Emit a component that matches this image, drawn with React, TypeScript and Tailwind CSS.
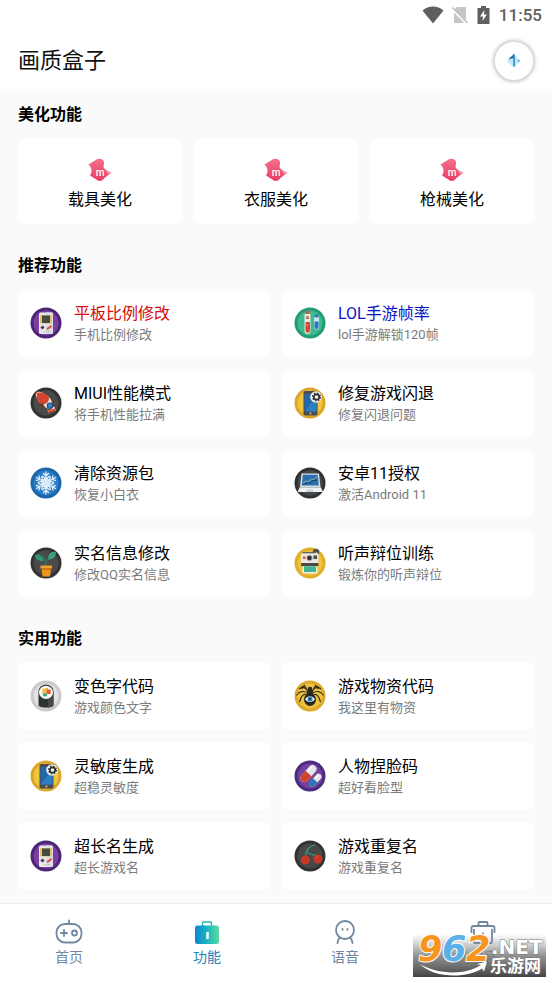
import { useState } from 'react';
import type { ReactNode } from 'react';

type IconName =
  | 'gameboy'
  | 'tubes'
  | 'rocket'
  | 'phone'
  | 'snow'
  | 'laptop'
  | 'plant'
  | 'camera'
  | 'sushi'
  | 'spider'
  | 'pills'
  | 'cherry';

interface Feature {
  title: string;
  desc: string;
  icon: IconName;
  color?: string;
}

const beautify = ['载具美化', '衣服美化', '枪械美化'];

const recommended: Feature[] = [
  { title: '平板比例修改', desc: '手机比例修改', icon: 'gameboy', color: 'text-[#d50b0b]' },
  { title: 'LOL手游帧率', desc: 'lol手游解锁120帧', icon: 'tubes', color: 'text-[#0b12c4]' },
  { title: 'MIUI性能模式', desc: '将手机性能拉满', icon: 'rocket' },
  { title: '修复游戏闪退', desc: '修复闪退问题', icon: 'phone' },
  { title: '清除资源包', desc: '恢复小白衣', icon: 'snow' },
  { title: '安卓11授权', desc: '激活Android 11', icon: 'laptop' },
  { title: '实名信息修改', desc: '修改QQ实名信息', icon: 'plant' },
  { title: '听声辩位训练', desc: '锻炼你的听声辩位', icon: 'camera' },
];

const practical: Feature[] = [
  { title: '变色字代码', desc: '游戏颜色文字', icon: 'sushi' },
  { title: '游戏物资代码', desc: '我这里有物资', icon: 'spider' },
  { title: '灵敏度生成', desc: '超稳灵敏度', icon: 'phone' },
  { title: '人物捏脸码', desc: '超好看脸型', icon: 'pills' },
  { title: '超长名生成', desc: '超长游戏名', icon: 'gameboy' },
  { title: '游戏重复名', desc: '游戏重复名', icon: 'cherry' },
];

const discs: Record<IconName, [string, string]> = {
  gameboy: ['#4b2676', '#7b3fa3'],
  tubes: ['#239b76', '#3fb98f'],
  rocket: ['#333333', '#4a4a4a'],
  phone: ['#dba62c', '#f0c63a'],
  snow: ['#1c66ab', '#2a7cc4'],
  laptop: ['#303336', '#45494c'],
  plant: ['#333333', '#4a4a4a'],
  camera: ['#dfae2b', '#eec43a'],
  sushi: ['#cacaca', '#e2e2e2'],
  spider: ['#dca92c', '#edc23c'],
  pills: ['#4b2a80', '#71439c'],
  cherry: ['#333333', '#484848'],
};

const drawings: Record<IconName, ReactNode> = {
  gameboy: (
    <>
      <rect x="9" y="5.5" width="14" height="21.5" rx="1.5" fill="#e9e8ec" />
      <path d="M16 5.5h5.5A1.5 1.5 0 0 1 23 7v18.5a1.5 1.5 0 0 1-1.5 1.5H16z" fill="#dddce3" />
      <rect x="10" y="8" width="12" height="8.5" rx=".8" fill="#e3c467" />
      <rect x="12" y="8.5" width="8" height="7.5" fill="#454a42" />
      <path d="M12.5 18.7v3.6M10.7 20.5h3.6" stroke="#39354a" strokeWidth="1.5" />
      <path d="m17.5 21.8 1.8-1.2M19.8 20.3l1.2-1" stroke="#d84b3c" strokeWidth="1.9" strokeLinecap="round" />
      <path d="m13.5 24.5 1 .9M16 25l1-.9M18 25l1-.9" stroke="#92909b" strokeWidth=".8" />
    </>
  ),
  tubes: (
    <>
      <rect x="10.5" y="5" width="6" height="22" rx="3" fill="#e8ece8" />
      <rect x="11" y="4" width="5" height="3" rx="1" fill="#bd6450" />
      <path d="M11.5 15h4.5v8.5a2.25 2.25 0 0 1-4.5 0z" fill="#df4630" />
      <path d="m12 9.500 3 2M15 9.500l-3 2" stroke="#c55845" strokeWidth="1.2" />
      <circle cx="13" cy="18" r=".8" fill="#f2a08f" />
      <rect x="20" y="9" width="5" height="13.5" rx="2" fill="#cfe4ec" />
      <rect x="20.5" y="7.5" width="4" height="3" rx=".8" fill="#327fae" />
      <path d="M20.5 14.5h4v5.5a2 2 0 0 1-4 0z" fill="#2077b9" />
    </>
  ),
  rocket: (
    <>
      <path d="M6 6c1-1.8 4-1.5 6.5-.3C19 8.5 24 15 25.5 23.5c-7.5-.8-14-4.5-17.5-10.5C6.5 10.5 5 8 6 6z" fill="#e9eaec" />
      <path d="M5.5 4.5 8 5.800c4-1 9 .7 11 5 .5 3.500-2.500 6.700-7 7C7.5 15.500 5.8 11 7 8z" fill="#d4452f" />
      <path d="m9 17 3.5-1 3 5-2 1zM21 13l2 1.5 2.5 6-2.5-1z" fill="#6d3d33" />
      <circle cx="20" cy="18.7" r="3.3" fill="#234a72" />
      <circle cx="20" cy="18.7" r="2.1" fill="#3385c5" />
      <path d="m17 23 2 4 1.5-3 2 2 .5-2.5 3 1-1-3" fill="#e2573b" />
    </>
  ),
  phone: (
    <>
      <rect x="9.5" y="4" width="14" height="24.5" rx="1.8" fill="#514a4d" />
      <path d="M10.5 7h12v17.5h-12z" fill="#2468ac" />
      <path d="M22.5 9v15.5H11z" fill="#2e80c3" />
      <circle cx="16.5" cy="26.4" r=".9" fill="#ddd5c8" />
      <circle cx="22" cy="10" r="5.8" fill="#f2f1ee" />
      <circle cx="22.5" cy="10" r="2.7" fill="none" stroke="#2c2d30" strokeWidth="1.7" />
      <circle cx="22.5" cy="10" r="3.9" fill="none" stroke="#2c2d30" strokeWidth="1.3" strokeDasharray="1.5 1.56" />
    </>
  ),
  snow: (
    <g stroke="#e2effa" strokeWidth="1.4" strokeLinecap="round" fill="none">
      {[0, 60, 120, 180, 240, 300].map((deg) => (
        <g key={deg} transform={`rotate(${deg} 16 16)`}>
          <path d="M16 16V5M13.5 6.5 16 9l2.5-2.5M12.7 9.2 16 12.2l3.3-3" />
        </g>
      ))}
      <circle cx="16" cy="16" r="4" fill="#d9eafa" />
    </g>
  ),
  laptop: (
    <>
      <path d="M7.5 6.5h17.5l1.5 14H6z" fill="#d7dee1" />
      <path d="M8.8 7.7h15l1 10.8H7.9z" fill="#2a6faf" />
      <path d="m9 16 3.5-2 2 .8 3-3 2 1 4-3.5" stroke="#9ab7ac" strokeWidth="1" fill="none" />
      <path d="m9 17.5 4-1.8 3 .5 3-2.5 4-.7" stroke="#183d66" strokeWidth="1" fill="none" />
      <path d="M5.5 20.5h21.5l2 4.5H3.7z" fill="#eef0f1" />
      <path d="M13 22.5h6l.5 2.5h-7z" fill="#cdd1d4" />
    </>
  ),
  plant: (
    <>
      <path d="M15.8 19c0-5-1-8.5-3.5-10M16 17c.3-3 1.5-5.5 3.5-7" stroke="#34785e" strokeWidth="1" fill="none" />
      <path d="M4.5 8c4-1.5 8 .2 9.5 5.5C9.5 15 6 12.5 4.5 8z" fill="#2d9c7c" />
      <path d="M18 12.5C18 7.5 21.5 4 26 5c-.3 5-3.5 7.5-8 7.5z" fill="#38ad88" />
      <path d="M5 8.5c3.5.5 6.5 2 8.5 4.5M18.5 12c2-3 4-5 7-6.5" stroke="#1f7b60" strokeWidth=".6" fill="none" />
      <rect x="10.5" y="18.5" width="11.5" height="3" rx=".5" fill="#f0a42e" />
      <path d="M11.5 21.5h9.5l-1 8h-7.5z" fill="#ee951c" />
      <path d="M11.5 21.5h9.5l-.2 1.2h-9.1z" fill="#c56d16" />
    </>
  ),
  camera: (
    <>
      <circle cx="22" cy="5" r="3.2" fill="#56504a" />
      <path d="M8.5 5.5h14.5l1.5 2v8.5H7V7.5z" fill="#e9e8e4" />
      <path d="M8.5 5h13v1.3h-13z" fill="#6b6255" />
      <rect x="7" y="16" width="17.5" height="3.3" rx=".8" fill="#4c4944" />
      <circle cx="15.5" cy="11" r="3.2" fill="#b9b9b9" />
      <circle cx="15.5" cy="11" r="2.3" fill="#302f37" />
      <path d="M9 9.5h2.5v2.5H9z" fill="#d15d47" />
      <path d="M19.5 8.5H23v3.5h-3.5z" fill="#4b4a50" />
      <path d="M8.5 19.3h15v7.2h-15z" fill="#eceeea" />
      <path d="M10 19.3h12V25H10z" fill="#3fb592" />
    </>
  ),
  sushi: (
    <>
      <path d="M8.5 12v13c0 3.5 15 3.5 15 0V12z" fill="#2f3334" />
      <path d="M18 13v14.5c3.5-.3 5.5-1.2 5.5-2.5V12z" fill="#46494a" />
      <ellipse cx="16" cy="11.5" rx="7.5" ry="7" fill="#393d3e" />
      <ellipse cx="16" cy="12.3" rx="7" ry="6.6" fill="#f8f8f8" />
      <path d="M12.5 8.5h4v6h-4z" fill="#f0c23c" />
      <path d="M16.5 9.5h4.2V14h-4.2z" fill="#e05c39" />
      <path d="M13 13.5h4v2.8h-4z" fill="#39a77f" />
      <path d="M16 8h2v2h-2z" fill="#efa03a" />
    </>
  ),
  spider: (
    <>
      <path
        d="M14.5 12.5C12.5 7.5 9 6.5 7.5 9M14 13C9.5 10.5 5.5 11 2.5 15.5M14 14.5C9 13.5 7 16 5.5 22M17.5 12.5c2-5 5.5-6 7-3.5M18 13c4.5-2.5 8.5-2 11.5 2.5M18 14.5c5-1 7 1.5 8.5 7.5M13.5 11 10.500 5.500 5 9M18.5 11l3-5.500L27 9"
        stroke="#292522"
        strokeWidth="1.1"
        fill="none"
      />
      <circle cx="16" cy="9" r="2.3" fill="#2b2825" />
      <path d="M13.5 10h5l.5 5h-6z" fill="#2b2825" />
      <ellipse cx="16" cy="19.5" rx="6" ry="6.5" fill="#292724" />
      <path d="M11 19.3c2.5-4 7.5-4 10 0-2.5 3.5-7.5 3.5-10 0z" fill="#ecf2f3" />
      <circle cx="16" cy="19" r="2.5" fill="#3185bf" />
      <circle cx="16" cy="19" r="1" fill="#173453" />
    </>
  ),
  pills: (
    <>
      <g transform="rotate(42 14.5 13.5)">
        <rect x="10.5" y="3.5" width="8" height="20" rx="4" fill="#e5e5e9" />
        <path d="M10.5 13.5h8v6a4 4 0 0 1-8 0z" fill="#d1452e" />
        <path d="M12.500 7v5" stroke="#ffffff" strokeWidth="1.2" strokeLinecap="round" />
      </g>
      <g transform="rotate(42 21.5 20)">
        <rect x="18.5" y="12.5" width="6" height="15.5" rx="3" fill="#e5e5e9" />
        <path d="M18.5 20.5h6v4.5a3 3 0 0 1-6 0z" fill="#2776b8" />
        <path d="M20.500 15v4" stroke="#ffffff" strokeWidth="1" strokeLinecap="round" />
      </g>
    </>
  ),
  cherry: (
    <>
      <path d="M11.5 18c0-7.500 3-12 9.500-13M12.500 11c2 3.500 6 3 11 5" stroke="#36a083" strokeWidth="1.1" fill="none" />
      <circle cx="11.500" cy="20" r="4.5" fill="#c93625" />
      <circle cx="24" cy="19" r="4.5" fill="#c93625" />
      <path d="M9 19c.4-1 1-1.5 2-1.700M21.500 18c.4-1 1-1.5 2-1.700" stroke="#d95845" strokeWidth="1" fill="none" />
    </>
  ),
};

function FeatureIcon({ name }: { name: IconName }) {
  const [outer, inner] = discs[name];
  return (
    <svg className="h-8 w-8 shrink-0" viewBox="0 0 32 32" aria-hidden="true">
      <circle cx="16" cy="16" r="15.5" fill={outer} />
      <circle cx="16" cy="16" r="12.5" fill={inner} />
      {drawings[name]}
    </svg>
  );
}

function StatusBar() {
  return (
    <div className="flex h-[30px] items-center justify-end gap-2 bg-white pr-[10px] text-[#5f5f5f]">
      <svg className="h-[18px] w-[22px]" viewBox="0 0 22 18" fill="currentColor">
        <path d="M11 17.5.5 4.5C6.5-.8 15.5-.8 21.5 4.5z" />
      </svg>
      <svg className="h-[18px] w-4" viewBox="0 0 16 18">
        <path d="M5 1h9v16H2V4z" fill="#c6c6c6" />
        <path d="m0 2.5 15 15" stroke="#ffffff" strokeWidth="3" />
        <path d="m.5 1.5 15 15.5" stroke="#bdbdbd" strokeWidth="1.5" />
      </svg>
      <svg className="mx-px h-[18px] w-[13px]" viewBox="0 0 13 18">
        <path d="M4 0h5v2h3.5v16H.5V2H4z" fill="currentColor" />
        <path d="M7.5 4 3 10.5h3L5.5 15l4.5-6.5H7z" fill="#ffffff" />
      </svg>
      <span className="text-[17px] leading-[30px] font-medium">11:55</span>
    </div>
  );
}

function BeautifyIcon() {
  return (
    <svg className="h-6 w-6" viewBox="0 0 24 24" aria-hidden="true">
      <defs>
        <linearGradient id="pink" x1="0" y1="0" x2="0" y2="1">
          <stop offset="0" stopColor="#f5718d" />
          <stop offset="1" stopColor="#e93a62" />
        </linearGradient>
      </defs>
      <path d="m15 10 8.500 5-7 5z" fill="#f2879f" />
      <path d="M.5 6.500 9 1.200c4.500-1.500 8 1.300 7 5.300-.8 2-.5 3.500.8 4.500l3.200 5.500-5.500 5.500c-1.500 1.200-3.500 1.200-5 .3L2 17.500c2-3 2.500-7.500-1.500-11z" fill="url(#pink)" />
      <text x="12" y="18" textAnchor="middle" fill="#ffffff" className="font-['Roboto'] text-[10px] font-medium">
        m
      </text>
    </svg>
  );
}

function SectionTitle({ children }: { children: ReactNode }) {
  return <h2 className="mb-[11px] text-base leading-6 font-bold text-black">{children}</h2>;
}

function FeatureGrid({ items }: { items: Feature[] }) {
  return (
    <div className="grid grid-cols-2 gap-3">
      {items.map((item) => (
        <button key={item.title} className="flex h-[68px] items-center gap-3 rounded-lg bg-white px-3 text-left">
          <FeatureIcon name={item.icon} />
          <span className="flex min-w-0 flex-col">
            <span className={`text-base leading-6 ${item.color ?? 'text-black'}`}>{item.title}</span>
            <span className="text-[13px] leading-[18px] text-[#7b7b7b]">{item.desc}</span>
          </span>
        </button>
      ))}
    </div>
  );
}

const tabs: { label: string; icon: ReactNode }[] = [
  {
    label: '首页',
    icon: (
      <g fill="none" stroke="currentColor" strokeWidth="1.8" strokeLinecap="round">
        <rect x="1.5" y="5" width="25" height="18.500" rx="8.500" />
        <path d="M14 1.5V5M6 14h6M9 11v6" />
        <circle cx="19.5" cy="14" r="2.5" />
      </g>
    ),
  },
  {
    label: '功能',
    icon: (
      <>
        <defs>
          <linearGradient id="bag" x1="0" y1="0" x2="1" y2="0">
            <stop offset="0" stopColor="#1184d4" />
            <stop offset=".5" stopColor="#18b6c0" />
            <stop offset="1" stopColor="#5fd8a0" />
          </linearGradient>
        </defs>
        <path d="M9.5 7V4q0-1 1-1h7q1 0 1 1v3" fill="none" stroke="#20b8b4" strokeWidth="1.5" />
        <rect x="2" y="6.5" width="24" height="18.5" rx="2.5" fill="url(#bag)" />
        <path d="M14.5 13v7" stroke="#ffffff" strokeWidth="2.5" />
      </>
    ),
  },
  {
    label: '语音',
    icon: (
      <g fill="none" stroke="currentColor" strokeWidth="1.8" strokeLinecap="round">
        <circle cx="14" cy="11" r="9" />
        <path d="M9 18.500q-2.500 2-2.500 5.500M19 18.500q2.500 2 2.500 5.500" />
        <path d="M11.500 10v.8M16.500 10v.8" />
      </g>
    ),
  },
  {
    label: '信息',
    icon: (
      <g fill="none" stroke="currentColor" strokeWidth="1.8">
        <path d="M9.5 7V4q0-1 1-1h7q1 0 1 1v3M2.5 14V9q0-2 2-2h19q2 0 2 2v5M5 10v13q0 1 1 1h16q1 0 1-1V10" />
        <path d="M14 13.5v2" />
      </g>
    ),
  },
];

function Watermark() {
  return (
    <svg
      className="pointer-events-none absolute right-[6px] bottom-[6px] h-[55px] w-[133px] font-['DejaVu_Sans'] font-bold"
      viewBox="0 -12 133 55"
      role="img"
      aria-label="962.NET 乐游网"
    >
      <defs>
        <linearGradient id="shade" x1="0" y1="0" x2="0" y2="1">
          <stop offset="0" stopColor="#999999" stopOpacity="0" />
          <stop offset=".5" stopColor="#808080" stopOpacity=".85" />
          <stop offset="1" stopColor="#444444" />
        </linearGradient>
      </defs>
      <rect width="133" height="43" fill="url(#shade)" />
      <path d="M7 30c16 10 45 12 61 1l-4-1 10-2.5-3 10-2-3C53 45 20 44 7 30z" fill="#ffffff" />
      <g stroke="#ffffff" strokeWidth="2" strokeLinejoin="round" paintOrder="stroke" className="text-[35px] italic">
        <text x="5" y="27" fill="#f7941d">
          9
        </text>
        <text x="29" y="27" fill="#5bb0e6">
          6
        </text>
        <text x="53" y="27" fill="#f7941d">
          2
        </text>
      </g>
      <g fill="#ffffff" stroke="#777777" strokeWidth="1" strokeLinejoin="round" paintOrder="stroke">
        <text x="78" y="20" className="text-[20px]">
          .NET
        </text>
        <text x="77" y="38" className="font-['Noto_Sans_CJK_SC'] text-[17px]">
          乐游网
        </text>
      </g>
    </svg>
  );
}

export default function App() {
  const [active, setActive] = useState('功能');

  return (
    <div className="relative flex h-dvh flex-col overflow-hidden bg-[#fafafa] font-['Roboto','Noto_Sans_CJK_SC',sans-serif]">
      <StatusBar />
      <header className="flex h-[61px] items-center justify-between bg-white px-[18px]">
        <h1 className="text-[22px] leading-8 text-[#111]">画质盒子</h1>
        <button
          aria-label="头像"
          className="flex h-10 w-10 items-center justify-center rounded-full border border-[#dedede] bg-white shadow-[0_0_4px_rgba(0,0,0,0.35)]"
        >
          <svg className="h-4 w-4" viewBox="0 0 16 16">
            <path d="M8 1 1 8l7 7 6-7z" fill="#c5e7f7" />
            <path d="M8 1 2 6.500 8 5z" fill="#1d70a7" />
            <path d="M7.300 1.500h1.500V14l-1.500-1.500z" fill="#2582bd" />
            <path d="m12 6.500 2.500 1.300L12 9z" fill="#5b9fc5" />
          </svg>
        </button>
      </header>

      <main className="flex min-h-0 flex-1 flex-col gap-[30px] overflow-y-auto px-[18px] pt-3 [scrollbar-width:none]">
        <section>
          <SectionTitle>美化功能</SectionTitle>
          <div className="grid grid-cols-3 gap-3">
            {beautify.map((label) => (
              <button key={label} className="flex h-[86px] flex-col items-center gap-[6px] rounded-lg bg-white pt-5 text-base leading-6 text-black">
                <BeautifyIcon />
                {label}
              </button>
            ))}
          </div>
        </section>
        <section>
          <SectionTitle>推荐功能</SectionTitle>
          <FeatureGrid items={recommended} />
        </section>
        <section>
          <SectionTitle>实用功能</SectionTitle>
          <FeatureGrid items={practical} />
        </section>
      </main>

      <nav className="flex h-20 shrink-0 border-t border-[#ededed] bg-white">
        {tabs.map((tab) => (
          <button
            key={tab.label}
            onClick={() => setActive(tab.label)}
            className={`flex flex-1 flex-col items-center pt-[15px] text-sm leading-5 ${
              active === tab.label ? 'text-[#1b80bd]' : 'text-[#71879f]'
            }`}
          >
            <svg className="h-7 w-7" viewBox="0 0 28 28" aria-hidden="true">
              {tab.icon}
            </svg>
            {tab.label}
          </button>
        ))}
      </nav>
      <Watermark />
    </div>
  );
}
